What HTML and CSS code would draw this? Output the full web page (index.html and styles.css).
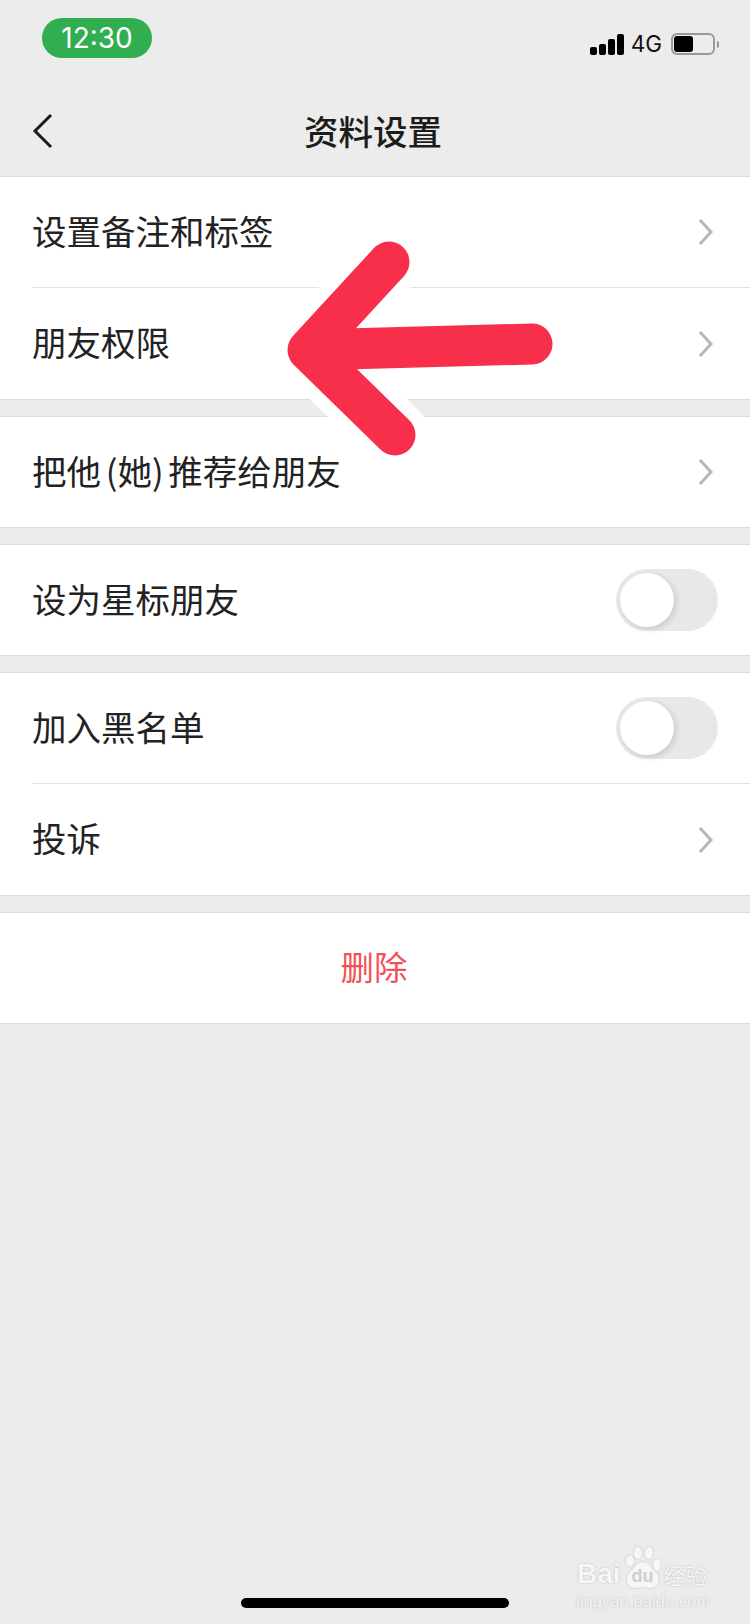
FILE: index.html
```html
<!DOCTYPE html>
<html lang="zh-CN">
<head>
  <meta charset="UTF-8" />
  <meta name="viewport" content="width=device-width, initial-scale=1" />
  <title>资料设置</title>
  <link rel="stylesheet" href="styles.css">
</head>
<body>
  <div class="phone">
    <div class="status-bar">
      <div class="time-pill">12:30</div>
      <div class="status-icons">
        <div class="signal"><span></span><span></span><span></span><span></span></div>
        <span class="net">4G</span>
        <div class="battery"><div class="battery-level"></div></div>
        <div class="battery-cap"></div>
      </div>
    </div>

    <div class="nav">
      <svg class="back" width="22" height="36" viewBox="0 0 22 36"><path d="M19 2 L3 18 L19 34" /></svg>
      <div class="nav-title">资料设置</div>
    </div>

    <div class="group">
      <div class="row">
        <span class="label">设置备注和标签</span>
        <svg class="chev" width="18" height="28" viewBox="0 0 18 28"><path d="M3 2 L14 14 L3 26" /></svg>
      </div>
      <div class="row">
        <span class="label">朋友权限</span>
        <svg class="chev" width="18" height="28" viewBox="0 0 18 28"><path d="M3 2 L14 14 L3 26" /></svg>
      </div>
    </div>

    <div class="group">
      <div class="row">
        <span class="label tight">把他 (她) 推荐给朋友</span>
        <svg class="chev" width="18" height="28" viewBox="0 0 18 28"><path d="M3 2 L14 14 L3 26" /></svg>
      </div>
    </div>

    <div class="group">
      <div class="row row-switch">
        <span class="label">设为星标朋友</span>
        <div class="switch"><div class="knob"></div></div>
      </div>
    </div>

    <div class="group">
      <div class="row row-switch">
        <span class="label">加入黑名单</span>
        <div class="switch"><div class="knob"></div></div>
      </div>
      <div class="row">
        <span class="label">投诉</span>
        <svg class="chev" width="18" height="28" viewBox="0 0 18 28"><path d="M3 2 L14 14 L3 26" /></svg>
      </div>
    </div>

    <div class="group">
      <div class="row row-center">
        <span class="label danger">删除</span>
      </div>
    </div>

    <div class="home-bar"></div>

    <!-- red arrow annotation on top of the screenshot -->
    <svg class="arrow" width="300" height="250" viewBox="0 0 300 250">
      <g class="arrow-halo"><path d="M118 42 L38 130 L125 215 M38 132 L248 126" /></g>
      <g class="arrow-line"><path d="M119 42 L38 130 L125 215 M38 130 L262 124" /></g>
    </svg>

    <!-- watermark -->
    <div class="watermark">
      <div class="wm-top">
        <span class="wm-bai">Bai</span>
        <div class="wm-paw">
          <svg width="36" height="42" viewBox="0 0 36 42">
            <ellipse cx="5" cy="14" rx="4" ry="5.5" />
            <ellipse cx="13" cy="6" rx="4" ry="6" />
            <ellipse cx="24" cy="6" rx="4" ry="6" />
            <ellipse cx="32" cy="18" rx="4" ry="6" />
            <path d="M18 15 C24 15 26 21 31 25 C36 30 34 41 25 41 C21 41 20 40 18 40 C16 40 14 41 10 41 C1 41 0 30 5 25 C10 21 12 15 18 15 Z" />
          </svg>
          <span class="wm-du">du</span>
        </div>
        <span class="wm-jy">经验</span>
      </div>
      <div class="wm-url">jingyan.baidu.com</div>
    </div>
  </div>
</body>
</html>
```

FILE: styles.css
```css
* {
  box-sizing: border-box;
  margin: 0;
  padding: 0;
}
body {
  background: #ececec;
  font-family: 'Noto Sans CJK SC', 'Liberation Sans', sans-serif;
  color: #222;
}
.phone {
  position: relative;
  width: 750px;
  height: 1624px;
  overflow: hidden;
  background: #ececec;
}

/* status bar */
.status-bar {
  height: 88px;
  display: flex;
  justify-content: space-between;
  align-items: flex-start;
  padding: 18px 31px 0 42px;
}
.time-pill {
  width: 110px;
  height: 40px;
  border-radius: 20px;
  background: #31ae50;
  color: #fff;
  font-family: 'Inter', 'Liberation Sans', sans-serif;
  font-size: 28px;
  line-height: 40px;
  text-align: center;
}
.status-icons {
  display: flex;
  align-items: center;
  margin-top: 14px;
}
.signal {
  display: flex;
  align-items: flex-end;
  gap: 2px;
  height: 21px;
  margin-right: 7px;
}
.signal span {
  width: 7px;
  background: #000;
  border-radius: 2px;
}
.signal span:nth-child(1) { height: 8px; }
.signal span:nth-child(2) { height: 11px; }
.signal span:nth-child(3) { height: 16px; }
.signal span:nth-child(4) { height: 21px; }
.net {
  font-family: 'Inter', 'Liberation Sans', sans-serif;
  font-size: 22.5px;
  line-height: 24px;
  margin-right: 9px;
  color: #111;
}
.battery {
  width: 44px;
  height: 22px;
  border: 2px solid #9a9a9a;
  border-radius: 6px;
  padding: 1px;
}
.battery-level {
  width: 19px;
  height: 100%;
  background: #000;
  border-radius: 3px;
}
.battery-cap {
  width: 2px;
  height: 7px;
  margin-left: 2px;
  background: #9a9a9a;
  border-radius: 0 2px 2px 0;
}

/* nav */
.nav {
  position: relative;
  height: 89px;
  display: flex;
  align-items: center;
  justify-content: center;
  padding-right: 4px;
  border-bottom: 1px solid #dcdcdc;
}
.nav-title {
  font-size: 34.5px;
  font-weight: 500;
  line-height: 44px;
  padding-bottom: 4px;
  color: #1c1c1c;
}
.back {
  position: absolute;
  left: 32px;
  top: 25px;
}
.back path {
  fill: none;
  stroke: #1c1c1c;
  stroke-width: 3;
}

/* list */
.group {
  background: #fff;
  border-bottom: 1px solid #dcdcdc;
  margin-bottom: 16px;
}
.group + .group {
  border-top: 1px solid #dcdcdc;
}
.row {
  height: 110px;
  display: flex;
  align-items: center;
  justify-content: space-between;
  margin-left: 32px;
  padding-right: 35px;
}
.row + .row {
  height: 112px;
  border-top: 1px solid #e2e2e2;
}
.row-switch {
  padding-right: 32px;
}
.row-center {
  justify-content: center;
  margin-left: 0;
  padding-right: 2px;
}
.label {
  font-size: 34.5px;
  line-height: 46px;
  padding-bottom: 5px;
}
.tight {
  word-spacing: -3px;
}
.danger {
  font-size: 33.5px;
  color: #f25157;
}
.chev path {
  fill: none;
  stroke: #b8b8b8;
  stroke-width: 3;
}

/* switch */
.switch {
  width: 102px;
  height: 62px;
  border-radius: 31px;
  background: #e8e8e8;
  padding: 4px;
}
.knob {
  width: 54px;
  height: 54px;
  border-radius: 50%;
  background: #fff;
  box-shadow: 2px 2px 6px rgba(0, 0, 0, 0.14);
}

/* overlays */
.arrow {
  position: absolute;
  left: 270px;
  top: 220px;
}
.arrow path {
  fill: none;
  stroke-linecap: round;
  stroke-linejoin: round;
}
.arrow-halo path {
  stroke: #fff;
  stroke-width: 68;
}
.arrow-line path {
  stroke: #f72f4a;
  stroke-width: 41;
}
.home-bar {
  position: absolute;
  left: 241px;
  top: 1598px;
  width: 268px;
  height: 10px;
  border-radius: 5px;
  background: #000;
}

/* baidu watermark */
.watermark {
  position: absolute;
  left: 575px;
  top: 1559px;
  width: 136px;
  color: #f6f6f6;
  text-shadow: 0 0 2px #b4b4b4;
}
.wm-top {
  display: flex;
  align-items: center;
  height: 30px;
}
.wm-bai {
  font-family: 'Liberation Sans', sans-serif;
  font-size: 28px;
  font-weight: 700;
  line-height: 30px;
  margin-left: 2px;
}
.wm-paw {
  position: relative;
  width: 36px;
  height: 30px;
  margin: 0 3px 0 4px;
}
.wm-paw svg {
  position: absolute;
  left: 0;
  bottom: 0;
  fill: #f6f6f6;
  filter: drop-shadow(0 0 1px #c0c0c0);
}
.wm-du {
  position: relative;
  display: block;
  padding-top: 7px;
  font-family: 'Liberation Sans', sans-serif;
  font-size: 18px;
  font-weight: 700;
  line-height: 20px;
  text-align: center;
  color: #cfcfcf;
  text-shadow: none;
}
.wm-jy {
  font-size: 22px;
  line-height: 30px;
  white-space: nowrap;
}
.wm-url {
  margin-top: 4px;
  margin-left: 1px;
  font-family: 'Liberation Sans', sans-serif;
  font-size: 16px;
  line-height: 18px;
  letter-spacing: 0.3px;
  white-space: nowrap;
}
```
